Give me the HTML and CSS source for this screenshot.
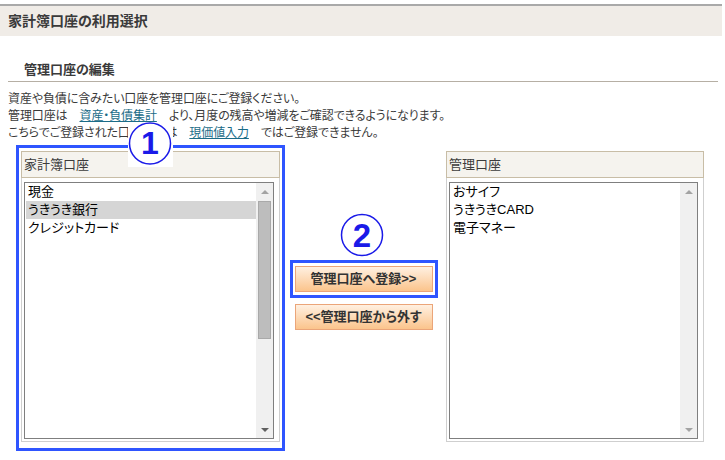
FILE: index.html
```html
<!DOCTYPE html>
<html lang="ja">
<head>
  <meta charset="UTF-8">
  <meta name="viewport" content="width=device-width, initial-scale=1.0">
  <title>家計簿口座の利用選択</title>
  <link rel="stylesheet" href="styles.css">
</head>
<body>
  <div class="page">
    <h1 class="page-title">家計簿口座の利用選択</h1>
    <h2 class="section-title">管理口座の編集</h2>

    <p class="intro">資産や負債に含みたい口座を管理口座にご登録ください。<br>
      管理口座は<a class="link" href="#">資産・負債集計</a>より、月度の残高や増減をご確認できるようになります。<br>
      こちらでご登録された口座残高は<a class="link" href="#">現価値入力</a>ではご登録できません。</p>

    <div class="transfer">
      <!-- 家計簿口座 -->
      <div class="highlight">
        <div class="panel">
          <div class="panel-head">家計簿口座</div>
          <div class="list">
            <ul class="items">
              <li>現金</li>
              <li class="selected">うきうき銀行</li>
              <li>クレジットカード</li>
            </ul>
            <div class="scrollbar">
              <span class="arrow up"></span>
              <span class="thumb"></span>
              <span class="arrow down dark"></span>
            </div>
          </div>
        </div>
      </div>

      <!-- ボタン -->
      <div class="actions">
        <svg class="mark mark-2" width="44" height="44" viewBox="0 0 44 44">
          <circle cx="22" cy="22" r="20.5" fill="none" stroke="#1a1ae8" stroke-width="1.5"/>
          <text x="22" y="34" text-anchor="middle" font-family="Liberation Sans, sans-serif" font-size="33" font-weight="bold" fill="#1a1ae8">2</text>
        </svg>
        <div class="highlight-btn">
          <button class="btn">管理口座へ登録&gt;&gt;</button>
        </div>
        <button class="btn btn-remove">&lt;&lt;管理口座から外す</button>
      </div>

      <!-- 管理口座 -->
      <div class="panel panel-right">
        <div class="panel-head">管理口座</div>
        <div class="list">
          <ul class="items">
            <li>おサイフ</li>
            <li>うきうきCARD</li>
            <li>電子マネー</li>
          </ul>
          <div class="scrollbar">
            <span class="arrow up"></span>
            <span class="track"></span>
            <span class="arrow down"></span>
          </div>
        </div>
      </div>
    </div>

    <!-- 番号マーク -->
    <svg class="mark mark-1" width="45" height="45" viewBox="0 0 45 45">
      <rect width="45" height="45" fill="#fff"/>
      <circle cx="22" cy="21.5" r="20.5" fill="none" stroke="#1a1ae8" stroke-width="1.5"/>
      <text x="22" y="31.5" text-anchor="middle" font-family="Liberation Sans, sans-serif" font-size="32" font-weight="bold" fill="#1a1ae8">1</text>
    </svg>
  </div>
</body>
</html>
```

FILE: styles.css
```css
body {
  margin: 0;
  padding: 0;
  background-color: #fff;
  font-family: "Liberation Sans", "Noto Sans CJK JP", sans-serif;
  font-feature-settings: "palt";
  color: #3a3a3a;
}
.page {
  position: relative;
  padding-top: 4px;
}
.page-title {
  margin: 0;
  width: 722px;
  height: 32px;
  box-sizing: border-box;
  border-top: 2px solid #a9a9a9;
  background-color: #f0ece7;
  padding-left: 8px;
  font-size: 14px;
  font-weight: bold;
  line-height: 30px;
}
.section-title {
  margin: 0 0 0 8px;
  width: 710px;
  padding: 25px 0 2px 16px;
  box-sizing: border-box;
  border-bottom: 1px solid #b6afa4;
  font-size: 13px;
  font-weight: bold;
  line-height: 18px;
}
.intro {
  margin: 9px 0 0 8px;
  font-size: 12px;
  line-height: 17px;
  letter-spacing: -0.1px;
}
.link {
  margin: 0 12px;
  color: #1b6c88;
  text-decoration: underline;
}
.transfer {
  display: flex;
  align-items: flex-start;
  margin: 3px 0 0 16px;
}
.highlight {
  border: 3px solid #2f55ff;
  padding: 3px 2px 6px;
}
.panel {
  width: 259px;
  box-sizing: border-box;
  border: 1px solid #cfcfcf;
  border-top: none;
}
.panel-head {
  margin: 0 -1px;
  height: 27px;
  box-sizing: border-box;
  border: 1px solid #c8bda6;
  background-color: #f5f3ee;
  padding-left: 2px;
  font-size: 13px;
  line-height: 25px;
  color: #3c3c3c;
}
.list {
  display: flex;
  margin: 4px 5px 2px 2px;
  height: 257px;
  box-sizing: border-box;
  border: 1px solid #7f7f7f;
  background-color: #fff;
}
.items {
  flex: 1;
  list-style-type: none;
  margin: 0;
  padding: 0 0 0 1px;
}
.items li {
  height: 18px;
  padding-left: 2px;
  font-size: 13px;
  line-height: 18px;
  color: #000;
  white-space: nowrap;
}
.items li.selected {
  background-color: #d5d5d5;
}
.scrollbar {
  display: flex;
  flex-direction: column;
  width: 17px;
  background-color: #f0f0f0;
}
.arrow {
  display: flex;
  justify-content: center;
  align-items: center;
  height: 17px;
}
.arrow::before {
  content: "";
  border-left: 4px solid transparent;
  border-right: 4px solid transparent;
}
.arrow.up::before {
  border-bottom: 4px solid #a3a3a3;
}
.arrow.down::before {
  border-top: 4px solid #a3a3a3;
}
.arrow.down.dark::before {
  border-top-color: #606060;
}
.thumb {
  display: block;
  width: 13px;
  height: 138px;
  margin: 1px 0 0 2px;
  box-sizing: border-box;
  border: 1px solid #a9a9a9;
  background-color: #bdbdbd;
}
.thumb + .arrow,
.track {
  margin-top: auto;
}
.track {
  flex: 1;
}
.actions {
  display: flex;
  flex-direction: column;
  align-items: center;
  width: 149px;
  margin: 0 8px 0 4px;
}
.mark-2 {
  display: block;
  margin: 68px 3px 0 0;
}
.mark-1 {
  position: absolute;
  left: 128px;
  top: 122px;
}
.highlight-btn {
  margin-top: 3px;
  border: 3px solid #2f55ff;
  padding: 3px 2px;
}
.btn {
  display: block;
  width: 138px;
  height: 26px;
  padding: 0;
  border: 1px solid #eba579;
  background: linear-gradient(#fff0e1, #fbc48c);
  font-family: "Liberation Sans", "Noto Sans CJK JP", sans-serif;
  font-feature-settings: "palt";
  font-size: 13px;
  font-weight: bold;
  line-height: 24px;
  color: #333;
  cursor: pointer;
}
.btn-remove {
  margin-top: 6px;
}
.panel-right {
  width: 258px;
  margin-top: 6px;
}
```
